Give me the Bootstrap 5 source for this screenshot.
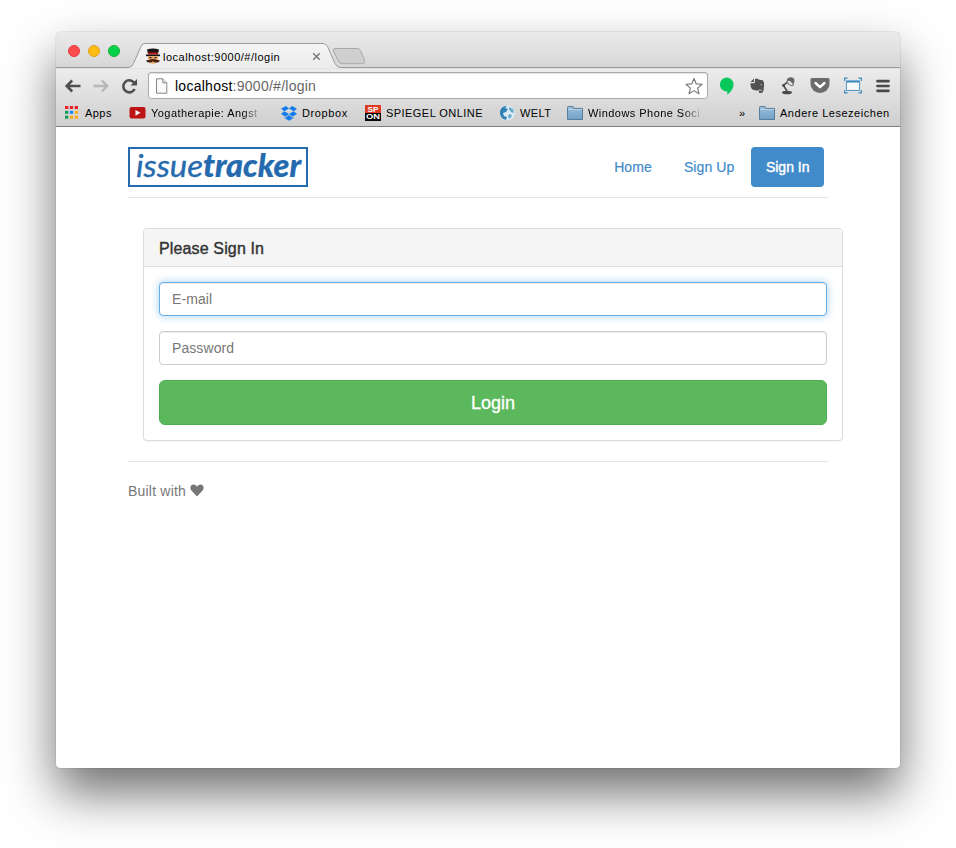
<!DOCTYPE html>
<html lang="en">
<head>
<meta charset="utf-8">
<meta name="viewport" content="width=device-width, initial-scale=1">
<title>issuetracker – Sign In</title>
<link href="https://cdn.jsdelivr.net/npm/bootstrap@5.3.0/dist/css/bootstrap.min.css" rel="stylesheet">
<style>
body{font-family:"Liberation Sans",Arial,sans-serif;font-size:14px;line-height:20px;color:#333;background:#fff;height:848px;overflow:hidden;padding:32px 56px}
svg{display:block;flex:none}
.window{height:736px;border-radius:5px 5px 4px 4px;box-shadow:0 0 1px rgba(0,0,0,.55),0 25px 50px rgba(0,0,0,.57)}
.chrome-top{border-radius:5px 5px 0 0;height:95px;background:linear-gradient(#ebebeb,#d6d6d6 36px,#ececec 37px,#cfcfcf);border-bottom:1px solid #7d7d7d;color:#000}
.tabstrip{height:36px}
.tabshape{left:0;top:0}
.lights{width:107px;padding:13px 0 0 12px;gap:8px}
.light{width:12px;height:12px;border-radius:50%;border:1px solid}
.light-close{background:#fc4b4b;border-color:#e43c41}
.light-min{background:#fdbc12;border-color:#dfa023}
.light-max{background:#05d248;border-color:#14b03c}
.tab-content-row{margin-left:-18px;padding-top:13px}
.tabtitle{font-size:11px;line-height:14px;width:118px;margin-left:2px;letter-spacing:.49px;white-space:nowrap}
.tab-x{margin-left:31px}
.toolbar{height:35px;padding-left:8px}
.address{width:560px;height:27px;margin-left:-1px;margin-right:1px;border:1px solid #aaa;border-radius:3px;background:#fff;box-shadow:inset 0 1px 1px rgba(0,0,0,.12);font-size:14px;padding-left:5px;color:#666;letter-spacing:.26px}
.url{padding-left:6px}
.extensions{margin-left:10px;gap:14px}
.marks{height:20px;padding-left:8px;font-size:11px;line-height:14px;letter-spacing:.45px}
.mk{gap:5px;height:16px;white-space:nowrap}
.fade-end{overflow:hidden;-webkit-mask-image:linear-gradient(90deg,#000 82%,transparent);mask-image:linear-gradient(90deg,#000 82%,transparent)}
.w-apps{width:65px}.w-yoga{width:152px}.w-drop{width:84px}.w-spon{width:134px}.w-welt{width:68px}.w-phone{width:172px}.w-more{width:20px}
.w-yoga .fade-end{width:112px}.w-phone .fade-end{width:115px}
.w-drop{letter-spacing:.6px}.w-other{letter-spacing:.52px}
.page-area{width:700px;margin:0 0 0 72px;padding-top:20px}
.site-header{height:51px;border-bottom:1px solid #e5e5e5;padding-right:4px}
.nav-pills{gap:2px;letter-spacing:.1px}
.nav-pills .nav-link{height:40px;padding:10px 15px;color:#428bca;border-radius:4px;-webkit-text-stroke:.2px #428bca}
.nav-pills .nav-link.active{background:#428bca;-webkit-text-stroke:.4px #fff;padding:10px 14.500px;letter-spacing:0}
.signin{margin:30px -15px 0 15px;border:1px solid #ddd;border-radius:4px;box-shadow:0 1px 1px rgba(0,0,0,.05);height:213px}
.signin .card-header{height:38px;padding:11px 15px 9px;background:#f5f5f5;border-color:#ddd}
.signin h1{font-size:16px;line-height:18px;margin:0;font-weight:400;-webkit-text-stroke:.4px #333;letter-spacing:.14px}
.signin .card-body{padding:15px}
.signin .form-control{height:34px;padding:6px 12px;font-size:14px;line-height:20px;border-color:#ccc;border-radius:4px;box-shadow:inset 0 1px 1px rgba(0,0,0,.075);margin-bottom:15px;letter-spacing:.08px}
.signin .form-control::placeholder{color:#777}
.signin .form-control.lit{border-color:#66afe9;box-shadow:inset 0 1px 1px rgba(0,0,0,.075),0 0 8px rgba(102,175,233,.6)}
.signin .btn{height:45px;font-size:18px;line-height:24px;border-radius:6px;background:#5cb85c;border-color:#4cae4c;-webkit-text-stroke:.3px #fff}
.site-footer{margin-top:20px;border-top:1px solid #e5e5e5;padding-top:19px;color:#777;gap:4px;letter-spacing:.2px}
</style>
</head>
<body>
<svg width="0" height="0" class="position-absolute" aria-hidden="true">
<defs><linearGradient id="fg" x2="0" y2="1"><stop stop-color="#9cc0da"/><stop offset="1" stop-color="#6fa1c6"/></linearGradient>
<linearGradient id="tg" x2="0" y2="1"><stop stop-color="#f5f5f5"/><stop offset="1" stop-color="#ebebeb"/></linearGradient>
<symbol id="folder" viewBox="0 0 16 16"><path d="M.5 14.500v-12q0-1 1-1h4q1 0 1 1v.9h9v11.100z" fill="url(#fg)" stroke="#567d9c"/><path d="M1 4.500h14" stroke="#b8d4e7"/></symbol></defs></svg>
<div class="window bg-white">
<div class="chrome-top">
<div class="tabstrip position-relative d-flex">
<svg class="tabshape position-absolute" width="844" height="36"><path d="M0 35.500H72Q76 35.500 77.500 31.500L85 14.500Q86.500 11.500 89 11.500H267Q270 11.500 271.500 14.500L279 31.500Q280.500 35.500 285 35.500H844V37H0z" fill="url(#tg)" stroke="#9a9a9a"/><path d="M278.500 16.500h23q2 0 3 2l4 10q.8 3.200-2.300 3.200h-20q-3 0-4-3l-4.700-9.500q-1-2.700 1-2.700z" fill="#cfcfcf" stroke="#a8a8a8"/></svg>
<div class="lights position-relative d-flex flex-shrink-0 me-auto"><span class="light light-close"></span><span class="light light-min"></span><span class="light light-max"></span></div>
<div class="tab-content-row position-relative d-flex align-items-center flex-grow-1">
<svg width="16" height="17" viewBox="0 0 16 17"><path d="M2 1.500q6-2 12 0L13 6H3z" fill="#171313"/><path d="M3 4.500h10v2H3z" fill="#c51d1e"/><path d="M1 6.500h14v1.700H1z" fill="#171313"/><path d="M3 8.200h10v5q-5 5-10 0z" fill="#e9a45f"/><path d="M4.500 9h2v1.200h-2zM9.500 9h2v1.200h-2z" fill="#332019"/><path d="M1 12q2 1 5-.7 2-.8 4 0Q13 13 15 12q-.5 3-4 2.500Q9 14.300 8 13.300 7 14.300 5 14.500 1.500 15 1 12z" fill="#442013"/></svg>
<span class="tabtitle">localhost:9000/#/login</span>
<svg class="tab-x" width="9" height="9" viewBox="0 0 9 9"><path d="m1.200 1.200 6.600 6.600m0-6.600L1.200 7.800" stroke="#7b7b7b" stroke-width="1.500"/></svg>
</div>
</div>
<div class="toolbar d-flex align-items-center">
<svg width="17" height="16" viewBox="0 0 17 16"><path d="M8.200 2.500 2.700 8l5.500 5.500M3 8h13.500" fill="none" stroke="#505050" stroke-width="2.600"/></svg>
<svg class="ms-2" width="21" height="16" viewBox="-4 0 21 16"><path d="m8.800 2.500 5.500 5.500-5.500 5.500M14 8H.5" fill="none" stroke="#b8b8b8" stroke-width="2.400"/></svg>
<svg class="ms-2" width="30" height="18" viewBox="-2 0 30 18"><path d="M14.200 5.800A6 6 0 1 0 14.700 12" fill="none" stroke="#505050" stroke-width="2.600"/><path d="M17 2v6.500h-6.500z" fill="#505050"/></svg>
<div class="address d-flex align-items-center ms-0 me-0">
<svg width="15" height="16" viewBox="0 0 15 16"><path d="M2.500.8h6.300l4 4v10.400H2.500z" fill="#fafafa" stroke="#858585"/><path d="M8.800.8v4h4" fill="#eee" stroke="#858585"/></svg>
<span class="url flex-grow-1"><span class="text-black">localhost</span>:9000/#/login</span>
<svg class="me-1" width="18" height="18" viewBox="0 0 19 18"><path d="m9.500 1 2.300 5.700 6.200.5-4.700 4 1.500 6-5.300-3.300-5.300 3.300 1.500-6L1 7.200l6.200-.5z" fill="#fff" stroke="#777" stroke-width="1.200" stroke-linejoin="round"/></svg>
</div>
<div class="extensions d-flex align-items-center">
<svg width="16" height="18" viewBox="-1 0 16 18"><path d="M7.500.5a7 7 0 0 1 7 7c0 4-3 8-6.200 10.300V14.500A7 7 0 1 1 7.500.5z" fill="#06c85b"/></svg>
<svg width="18" height="17" viewBox="0 0 18 17"><path d="M2.500 5 6 1.500V5z" fill="#555"/><path d="M7 2q2-1 3.500.6l4 .7q1.300.3 1.500 3 .2 7-1.500 9.200-1.500 1-3.500.2-.8-3 1.800-2.400v1h.8q.4-1.600-1.600-1.700-1.300 0-1.800 1Q5 13.500 3.500 11.500 2.300 9 2.400 6.200H6q1-.2 1-1.200z" fill="#515151"/><path d="M12.200 8q1.200-1.400 2 .3z" fill="#ddd"/></svg>
<svg width="16" height="18" viewBox="0 0 16 18"><path d="M8.500 4 3.500 8.500 7 14" fill="none" stroke="#494949" stroke-width="1.600"/><path d="M6.500 3Q8-.5 11.500.3q3 .7 3 3.700-.2 2-2 3.800z" fill="#666"/><ellipse cx="10.200" cy="6" rx="3.600" ry="1.800" transform="rotate(38 10.200 6)" fill="#e8e8e8" stroke="#666"/><ellipse cx="7" cy="15.500" rx="5" ry="1.800" fill="#494949"/><circle cx="3.500" cy="8.500" r="1.400" fill="#494949"/></svg>
<svg width="20" height="17" viewBox="0 0 20 17"><path d="M2 1h16q1.500 0 1.500 1.500V7A9.500 9 0 0 1 .5 7V2.500Q.5 1 2 1z" fill="#6c6c6c"/><path d="m5.500 6 4.500 4.200L14.500 6" fill="none" stroke="#fff" stroke-width="2.400" stroke-linecap="round" stroke-linejoin="round"/></svg>
<svg width="18" height="17" viewBox="0 0 20 18"><path d="M.7 4V.8H4M16 .8h3.300V4M.7 14v3.200H4M16 17.200h3.300V14" fill="none" stroke="#3c8bc2" stroke-width="1.300"/><path d="M2.700 4h14.600v10.500H2.700z" fill="#f8f8f8" stroke="#3c8bc2"/><path d="M2.700 4.700h14.600" stroke="#3c8bc2" stroke-width="2"/></svg>
<svg width="14" height="14" viewBox="0 0 14 14"><path d="M1.500 2.200h11M1.500 7h11M1.500 11.800h11" stroke="#484848" stroke-width="2.700" stroke-linecap="round"/></svg>
</div>
</div>
<div class="marks d-flex align-items-center">
<div class="mk w-apps d-flex align-items-center"><svg width="16" height="16" viewBox="0 0 16 16"><path d="M1 1h3.300v3H1zM5.800 1h3.300v3H5.800zM10.700 1H14v3h-3.300z" fill="#ec2027"/><path d="M1 5.800h3.300v3H1z" fill="#0b9d58"/><path d="M5.800 5.800h3.300v3H5.800z" fill="#1683fb"/><path d="M10.700 5.800H14v3h-3.300zM5.800 10.700h3.300v3H5.800zM10.700 10.700H14v3h-3.300z" fill="#fbae17"/><path d="M1 10.700h3.300v3H1z" fill="#0b9d58"/></svg><span>Apps</span></div>
<div class="mk w-yoga d-flex align-items-center"><svg width="17" height="16" viewBox="0 0 17 16"><rect x=".5" y="2" width="16" height="11.500" rx="2" fill="#bd1416"/><path d="m6.500 4.900 5 2.900-5 2.900z" fill="#fff"/></svg><span class="fade-end">Yogatherapie: Angst</span></div>
<div class="mk w-drop d-flex align-items-center"><svg width="16" height="16" viewBox="0 0 16 16"><path d="M4.800 1 8 3.500 3.300 6.300 0 3.800zM11.200 1 16 3.800l-3.300 2.500L8 3.500zM0 8.900l3.300-2.600L8 9.100l-3.200 2.600zM16 8.900l-3.300-2.600L8 9.100l3.200 2.600zM3.500 12l1.300.8L8 10.100l3.200 2.700 1.300-.8v1L8 15.700 3.500 13z" fill="#137ded"/></svg><span>Dropbox</span></div>
<div class="mk w-spon d-flex align-items-center"><svg width="16" height="16" viewBox="0 0 16 16"><path d="M0 0h16v8H0z" fill="#df3b22"/><path d="M0 8h16v8H0z" fill="#080808"/><g fill="#fff" font-family="Liberation Sans,sans-serif" font-weight="700" font-size="7"><text x="2.500" y="6.600" textLength="11" lengthAdjust="spacingAndGlyphs" letter-spacing="0">SP</text><text x="1" y="14.400" textLength="14" lengthAdjust="spacingAndGlyphs" letter-spacing="0">ON</text></g></svg><span>SPIEGEL ONLINE</span></div>
<div class="mk w-welt d-flex align-items-center"><svg width="16" height="16" viewBox="0 0 16 16"><circle cx="8.300" cy="8" r="7.500" fill="#dcebf3"/><path d="M1 6Q2.500 1 8 .7L6 3l3 1-2 3-3 1 1 3 3 1-1 3Q0 13 1 6z" fill="#3181b4"/><path d="m10 2 4 2 1 4-3-1-2-3zM10 9l3 1-2 4-2-2z" fill="#65a9cd"/></svg><span>WELT</span></div>
<div class="mk w-phone d-flex align-items-center"><svg width="16" height="16"><use href="#folder"/></svg><span class="fade-end">Windows Phone Soci</span></div>
<div class="mk w-more d-flex align-items-center">»</div>
<div class="mk w-other d-flex align-items-center"><svg width="16" height="16"><use href="#folder"/></svg><span>Andere Lesezeichen</span></div>
</div>
</div>
<main class="page-area">
<header class="site-header d-flex justify-content-between align-items-start">
<svg width="180" height="40" viewBox="0 0 180 40" role="img" aria-label="issuetracker"><path d="M1 1h178v38H1z" fill="#fff" stroke="#256aae" stroke-width="2"/><g font-family="Lato,sans-serif" font-style="italic" font-size="31.500" fill="#256aae" stroke="#256aae"><text x="8" y="30" textLength="67" lengthAdjust="spacingAndGlyphs" stroke-width=".35">issue</text><text x="75" y="30" textLength="98" lengthAdjust="spacingAndGlyphs" font-weight="900" stroke-width=".2">tracker</text></g></svg>
<ul class="nav nav-pills"><li class="nav-item"><a class="nav-link" href="#">Home</a></li><li class="nav-item"><a class="nav-link" href="#">Sign Up</a></li><li class="nav-item"><a class="nav-link active" href="#">Sign In</a></li></ul>
</header>
<form class="signin card">
<div class="card-header"><h1>Please Sign In</h1></div>
<div class="card-body">
<input class="form-control lit" type="text" placeholder="E-mail">
<input class="form-control" type="password" placeholder="Password">
<button class="btn btn-success w-100" type="button">Login</button>
</div>
</form>
<footer class="site-footer d-flex align-items-center"><span>Built with</span><svg width="14" height="15" viewBox="0 0 14 15"><path d="M7 12.500 1.200 6.300Q-.5 3.500 1.300 1.300 4.500-.8 7 2.500 9.500-.8 12.700 1.300 14.500 3.500 12.800 6.300z" fill="#777"/></svg></footer>
</main>
</div>
<script src="https://cdn.jsdelivr.net/npm/bootstrap@5.3.0/dist/js/bootstrap.bundle.min.js"></script>
</body>
</html>
